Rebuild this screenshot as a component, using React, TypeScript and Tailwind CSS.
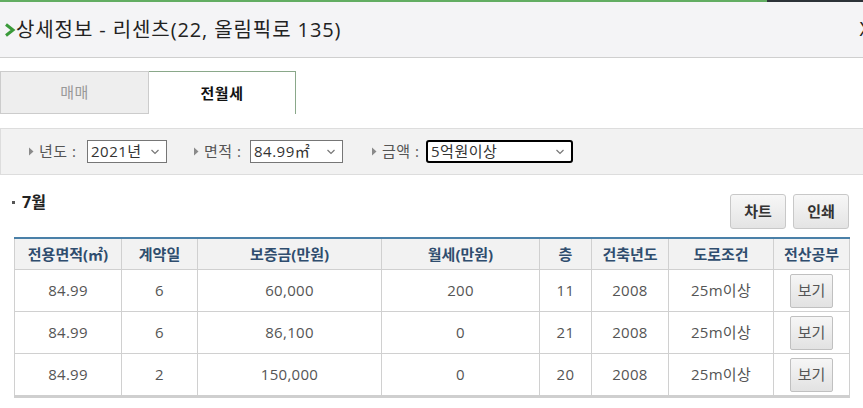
import React from "react";

const F = { fontFamily: '"Open Sans", "Noto Sans CJK KR", sans-serif' };

function Chev() {
  return (
    <svg width="10" height="6" viewBox="0 0 10 6" className="shrink-0">
      <path d="M1.5 1 L5 4.5 L8.5 1" fill="none" stroke="#777" strokeWidth="1.2" />
    </svg>
  );
}

function Tri() {
  return (
    <svg width="6" height="9" viewBox="0 0 6 9" className="shrink-0">
      <path d="M1 0.5 L5.5 4.5 L1 8.5 Z" fill="#8a8a8a" />
    </svg>
  );
}

function Sel({ w, text, focus }: { w: string; text: string; focus?: boolean }) {
  return (
    <div
      className={
        "flex h-[23px] items-center justify-between bg-white pl-[3px] pr-[6px] text-[15px] tracking-[0.5px] text-[#333] " +
        w +
        (focus ? " rounded-[3px] border-2 border-black" : " border border-[#767676]")
      }
    >
      <span className="leading-none">{text}</span>
      <Chev />
    </div>
  );
}

const rows = [
  ["84.99", "6", "60,000", "200", "11", "2008", "25m이상"],
  ["84.99", "6", "86,100", "0", "21", "2008", "25m이상"],
  ["84.99", "2", "150,000", "0", "20", "2008", "25m이상"],
];

const heads = ["전용면적(㎡)", "계약일", "보증금(만원)", "월세(만원)", "층", "건축년도", "도로조건", "전산공부"];
const widths = ["w-[107px]", "w-[76px]", "w-[184px]", "w-[158px]", "w-[52px]", "w-[77px]", "w-[105px]", "w-[77px]"];

export default function App() {
  return (
    <div className="h-[408px] w-[863px] overflow-hidden bg-white" style={F}>
      <div className="flex h-[2px]">
        <div className="w-[767px] bg-[#62ad62]" />
        <div className="flex-1 bg-[#2c3238]" />
      </div>
      <div className="relative flex h-[56px] items-center border-b border-[#cfcfcf] bg-[#f4f4f6]">
        <svg width="12" height="14" viewBox="0 0 12 14" className="ml-[4px] mt-[1px]">
          <path d="M2 1.5 L9 7 L2 12.5" fill="none" stroke="#3a9a3a" strokeWidth="3" />
        </svg>
        <span className="text-[20px] leading-none tracking-[0.9px] text-[#222]">상세정보 - 리센츠(22, 올림픽로 135)</span>
        <span className="absolute right-[-8px] top-[17px] text-[20px] leading-none text-[#222]">X</span>
      </div>
      <div className="mt-[13px] flex h-[43px]">
        <div className="flex w-[149px] items-center justify-center border border-[#cccccc] bg-[#eeeeee] text-[15px] tracking-[0.5px] text-[#999]">
          매매
        </div>
        <div className="flex w-[147px] items-center justify-center border border-b-0 border-l-0 border-[#8aa88a] bg-white text-[15px] font-bold tracking-[0.5px] text-[#111]">
          전월세
        </div>
      </div>
      <div className="mt-[14px] flex h-[47px] items-center border border-r-0 border-[#dddddd] bg-[#f2f2f2] pl-[27px] text-[15px] tracking-[0.5px] text-[#555]">
        <Tri />
        <span className="ml-[5px] mr-[5px] w-[43px] whitespace-nowrap">년도 :</span>
        <Sel w="w-[80px]" text="2021년" />
        <div className="ml-[26px]">
          <Tri />
        </div>
        <span className="ml-[5px] mr-[5px] w-[41px] whitespace-nowrap">면적 :</span>
        <Sel w="w-[93px]" text="84.99㎡" />
        <div className="ml-[28px]">
          <Tri />
        </div>
        <span className="ml-[5px] mr-[4px] w-[40px] whitespace-nowrap">금액 :</span>
        <Sel w="w-[147px]" text="5억원이상" focus />
      </div>
      <div className="flex h-[62px] items-start pl-[12px] pr-[14px]">
        <div className="mt-[15px] flex items-center text-[16px] font-bold text-[#222]">
          <div className="h-[3px] w-[3px] bg-[#555]" />
          <span className="ml-[7px]">7월</span>
        </div>
        <div className="ml-auto mt-[19px] flex gap-[7px]">
          <button className="h-[35px] w-[56px] rounded-[3px] border border-[#c8c8c8] bg-gradient-to-b from-[#f7f7f7] to-[#e4e4e4] text-[15px] font-bold text-[#333]">
            차트
          </button>
          <button className="h-[35px] w-[56px] rounded-[3px] border border-[#c8c8c8] bg-gradient-to-b from-[#f7f7f7] to-[#e4e4e4] text-[15px] font-bold text-[#333]">
            인쇄
          </button>
        </div>
      </div>
      <div className="ml-[14px] w-[836px] border-t-2 border-b-[3px] border-t-[#4a80a8] border-b-[#cfcfcf]">
        <div className="flex h-[30px] bg-[#f2f2f2]">
          {heads.map((h, i) => (
            <div
              key={h}
              className={
                "flex items-center justify-center border-l border-[#d0d0d0] text-[15px] font-bold text-[#2f4d6e] " +
                widths[i] +
                (i === 7 ? " border-r" : "")
              }
            >
              {h}
            </div>
          ))}
        </div>
        {rows.map((r, ri) => (
          <div key={ri} className="flex h-[42px] border-t border-[#d0d0d0]">
            {r.map((c, i) => (
              <div
                key={i}
                className={"flex items-center justify-center border-l border-[#d0d0d0] text-[15px] tracking-[0.3px] text-[#555] " + widths[i]}
              >
                {c}
              </div>
            ))}
            <div className={"flex items-center justify-center border-x border-[#d0d0d0] " + widths[7]}>
              <button className="h-[34px] w-[43px] rounded-[2px] border border-[#c0c0c0] bg-gradient-to-b from-[#f6f6f6] to-[#e2e2e2] text-[15px] text-[#555]">
                보기
              </button>
            </div>
          </div>
        ))}
      </div>
    </div>
  );
}
